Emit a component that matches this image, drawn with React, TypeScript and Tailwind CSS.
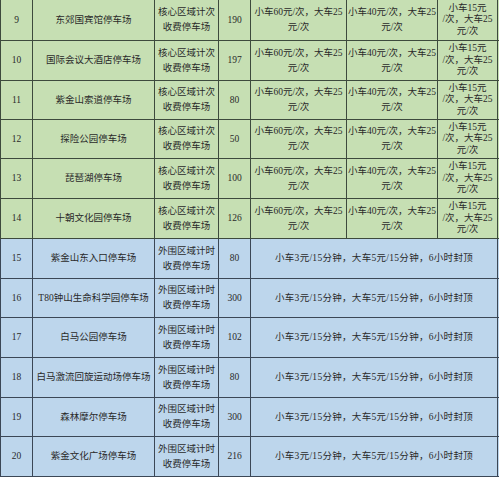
import React from "react";

type Row = {
  n: string;
  name: string;
  type: [string, string];
  count: string;
  green: boolean;
  h: string;
};

const rows: Row[] = [
  { n: "9", name: "东郊国宾馆停车场", type: ["核心区域计次", "收费停车场"], count: "190", green: true, h: "h-[41px]" },
  { n: "10", name: "国际会议大酒店停车场", type: ["核心区域计次", "收费停车场"], count: "197", green: true, h: "h-[40px]" },
  { n: "11", name: "紫金山索道停车场", type: ["核心区域计次", "收费停车场"], count: "80", green: true, h: "h-[39px]" },
  { n: "12", name: "探险公园停车场", type: ["核心区域计次", "收费停车场"], count: "50", green: true, h: "h-[39px]" },
  { n: "13", name: "琵琶湖停车场", type: ["核心区域计次", "收费停车场"], count: "100", green: true, h: "h-[40px]" },
  { n: "14", name: "十朝文化园停车场", type: ["核心区域计次", "收费停车场"], count: "126", green: true, h: "h-[40px]" },
  { n: "15", name: "紫金山东入口停车场", type: ["外围区域计时", "收费停车场"], count: "80", green: false, h: "h-[40px]" },
  { n: "16", name: "T80钟山生命科学园停车场", type: ["外围区域计时", "收费停车场"], count: "300", green: false, h: "h-[39px]" },
  { n: "17", name: "白马公园停车场", type: ["外围区域计时", "收费停车场"], count: "102", green: false, h: "h-[40px]" },
  { n: "18", name: "白马激流回旋运动场停车场", type: ["外围区域计时", "收费停车场"], count: "80", green: false, h: "h-[40px]" },
  { n: "19", name: "森林摩尔停车场", type: ["外围区域计时", "收费停车场"], count: "300", green: false, h: "h-[39px]" },
  { n: "20", name: "紫金文化广场停车场", type: ["外围区域计时", "收费停车场"], count: "216", green: false, h: "h-[40px]" },
];

export default function App() {
  return (
    <div
      className="w-[499px] h-[477px] overflow-hidden bg-white text-[9.5px] leading-[15px] text-[#2a2a2a]"
      style={{ fontFamily: '"Liberation Serif", "Noto Sans CJK SC", serif' }}
    >
      {rows.map((r) => {
        const bg = r.green ? "bg-[#c6dfb3]" : "bg-[#bdd6ec]";
        const bc = r.green ? "border-[#3d4a3d]" : "border-[#3b4756]";
        const cell = `flex items-center justify-center text-center border-r ${bc} h-full`;
        return (
          <div key={r.n} className={`flex ${bg} ${r.h} border-b border-l ${bc} box-border`}>
            <div className={`${cell} w-[32px]`}>{r.n}</div>
            <div className={`${cell} w-[122px]`}>{r.name}</div>
            <div className={`${cell} w-[64px]`}>
              <div>
                {r.type[0]}
                <br />
                {r.type[1]}
              </div>
            </div>
            <div className={`${cell} w-[32px]`}>{r.count}</div>
            {r.green ? (
              <>
                <div className={`${cell} w-[96px]`}>
                  <div>
                    小车60元/次，大车25
                    <br />
                    元/次
                  </div>
                </div>
                <div className={`${cell} w-[91px]`}>
                  <div>
                    小车40元/次，大车25
                    <br />
                    元/次
                  </div>
                </div>
                <div className={`${cell} w-[60px] leading-[11.5px]`}>
                  <div>
                    小车15元
                    <br />
                    /次，大车25
                    <br />
                    元/次
                  </div>
                </div>
              </>
            ) : (
              <div className={`${cell} w-[247px]`}>
                <div className="tracking-[0.3px]">小车3元/15分钟，大车5元/15分钟，6小时封顶</div>
              </div>
            )}
          </div>
        );
      })}
    </div>
  );
}
